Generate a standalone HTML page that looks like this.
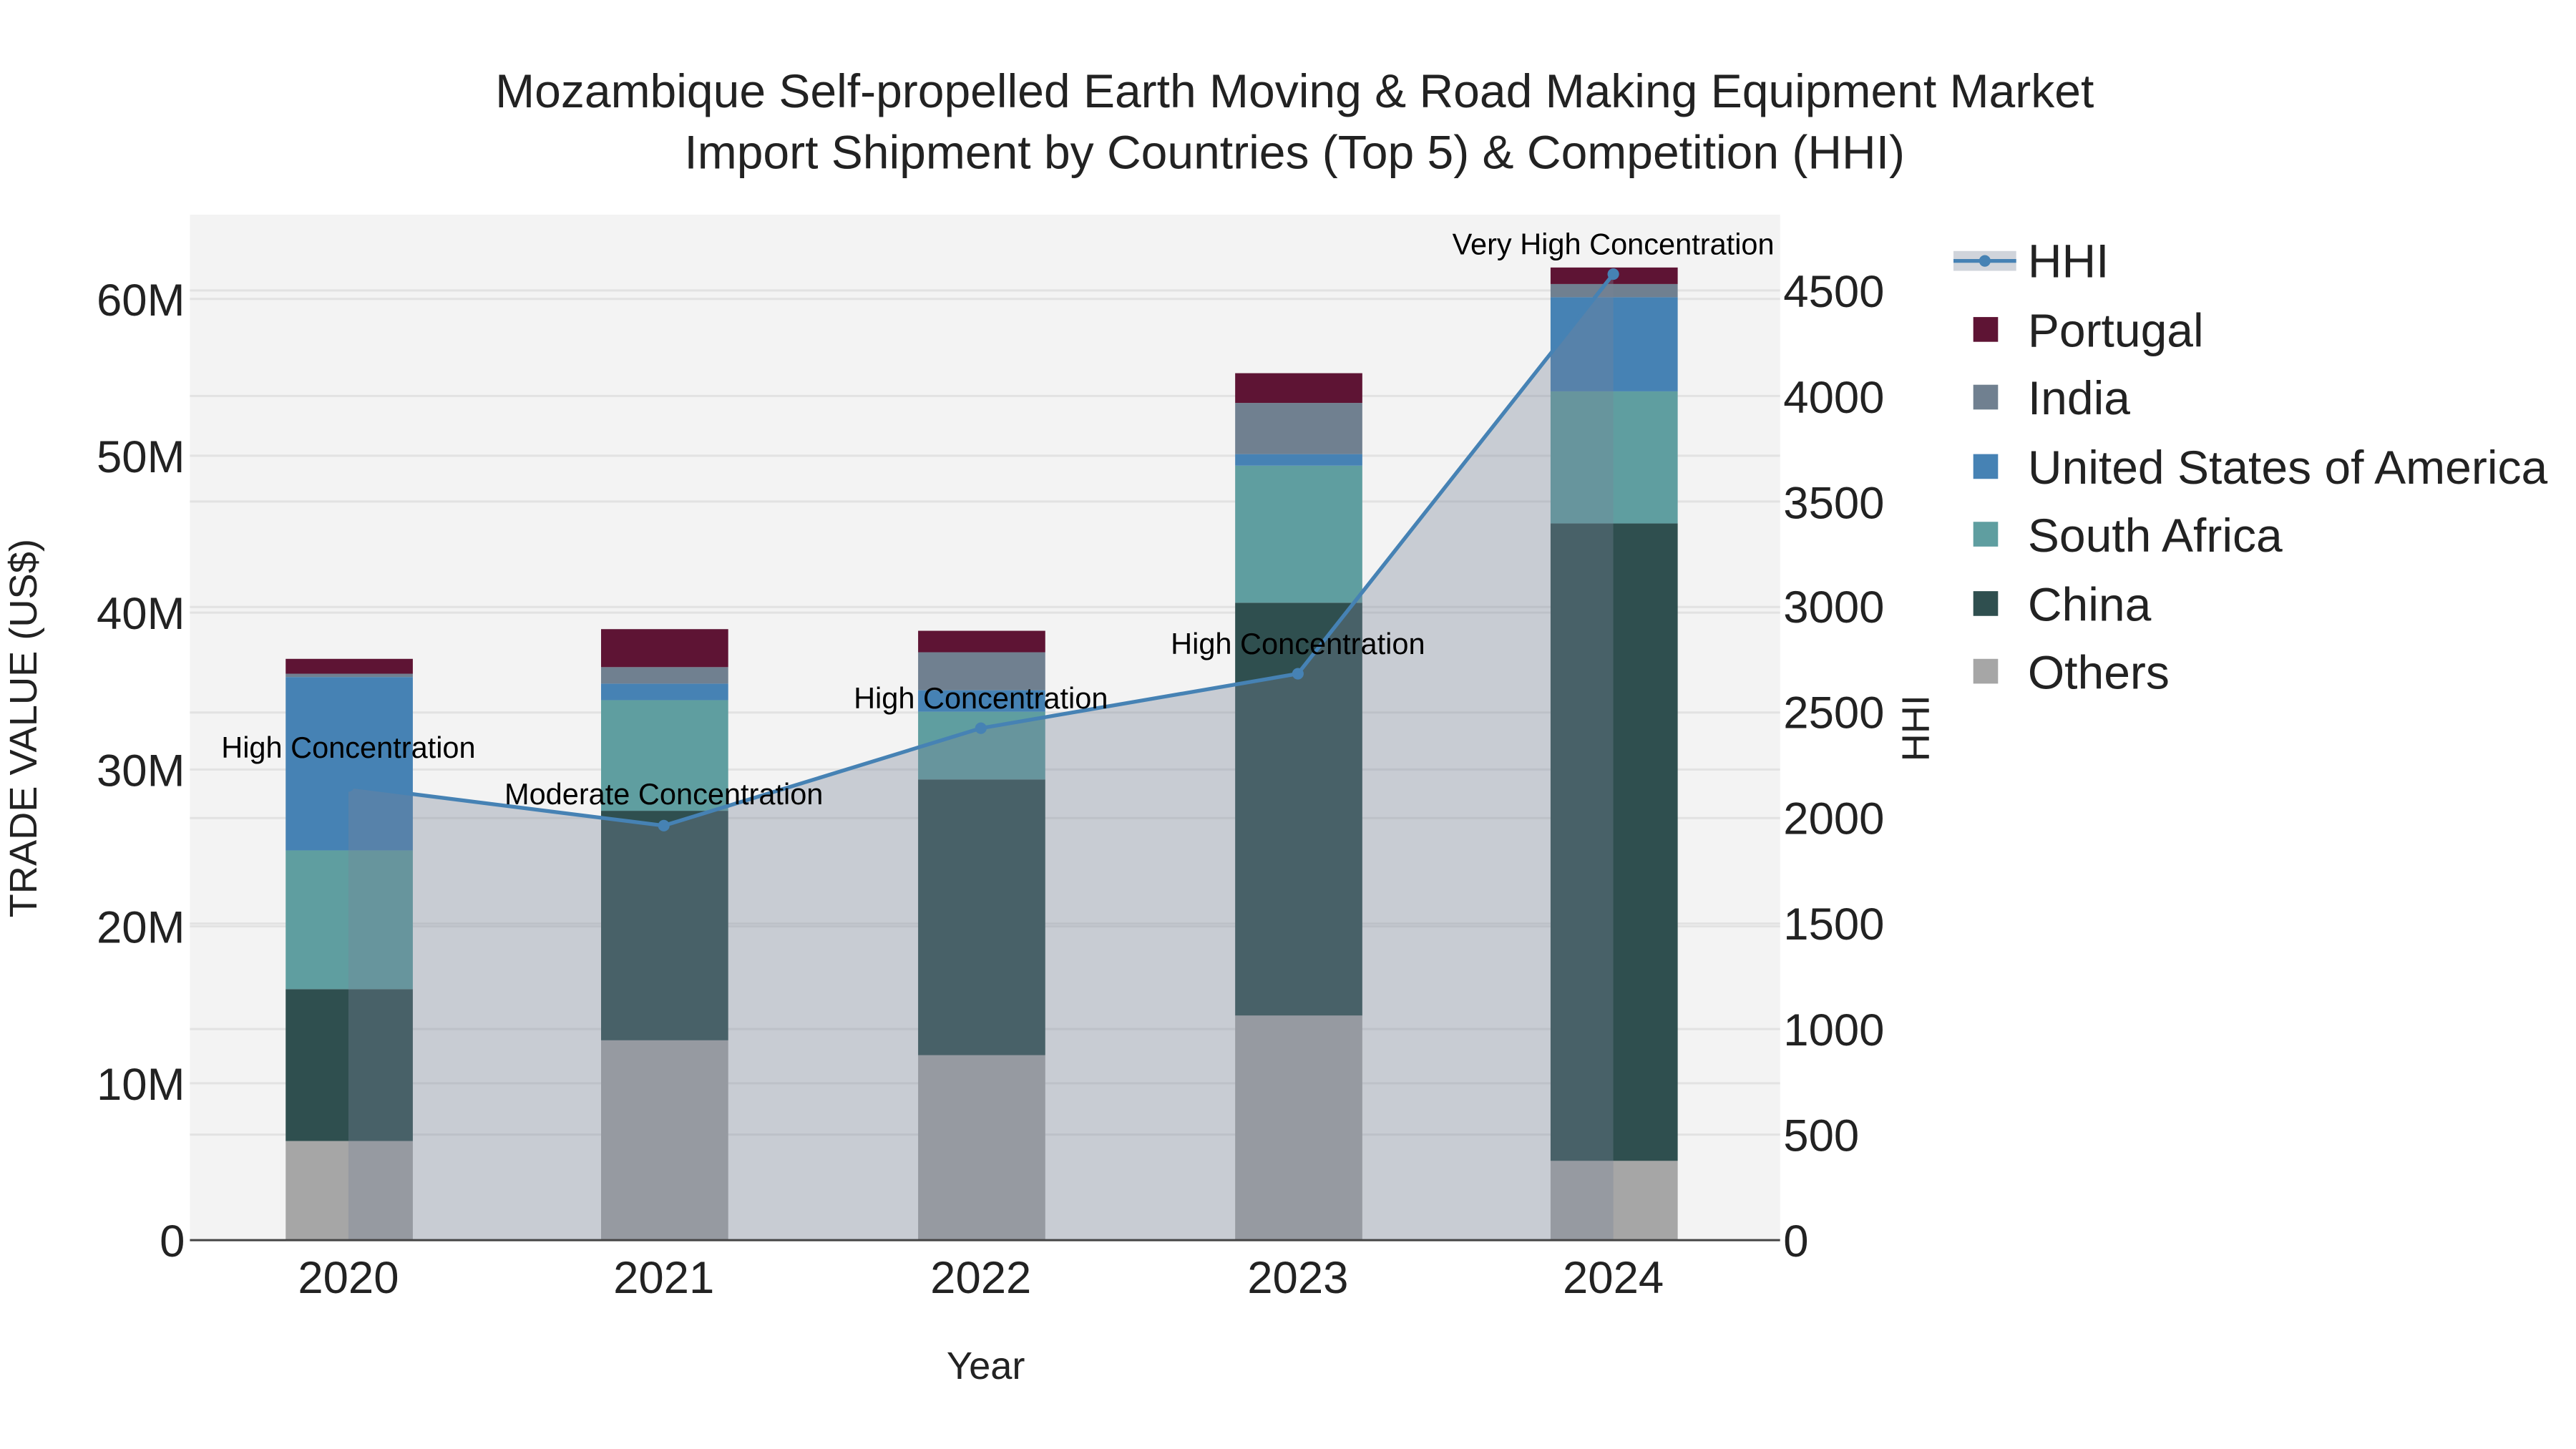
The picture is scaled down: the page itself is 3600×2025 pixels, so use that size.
<!DOCTYPE html>
<html><head><meta charset="utf-8"><style>html,body{margin:0;padding:0;background:#fff}svg{display:block}</style></head>
<body>
<svg width="3600" height="2025" viewBox="0 0 1560 877.5" xmlns="http://www.w3.org/2000/svg" font-family="Liberation Sans, Arial, sans-serif">
<rect width="1560" height="877.5" fill="#fff"/>
<rect x="115" y="130" width="963" height="621" fill="#f3f3f3"/>
<g stroke="#e2e2e2" stroke-width="1.3">
<line x1="115" x2="1078" y1="656" y2="656"/><line x1="115" x2="1078" y1="561" y2="561"/><line x1="115" x2="1078" y1="466" y2="466"/><line x1="115" x2="1078" y1="371" y2="371"/><line x1="115" x2="1078" y1="276" y2="276"/><line x1="115" x2="1078" y1="181" y2="181"/>
<line x1="115" x2="1078" y1="687.1" y2="687.1"/><line x1="115" x2="1078" y1="623.2" y2="623.2"/><line x1="115" x2="1078" y1="559.3" y2="559.3"/><line x1="115" x2="1078" y1="495.4" y2="495.4"/><line x1="115" x2="1078" y1="431.5" y2="431.5"/><line x1="115" x2="1078" y1="367.6" y2="367.6"/><line x1="115" x2="1078" y1="303.7" y2="303.7"/><line x1="115" x2="1078" y1="239.8" y2="239.8"/><line x1="115" x2="1078" y1="175.9" y2="175.9"/>
</g>
<rect x="173" y="691" width="77" height="60" fill="#a6a6a6"/>
<rect x="173" y="599" width="77" height="92" fill="#2f4f4f"/>
<rect x="173" y="515" width="77" height="84" fill="#5f9ea0"/>
<rect x="173" y="410" width="77" height="105" fill="#4682b4"/>
<rect x="173" y="408" width="77" height="2" fill="#708090"/>
<rect x="173" y="399" width="77" height="9" fill="#5e1434"/>
<rect x="364" y="630" width="77" height="121" fill="#a6a6a6"/>
<rect x="364" y="491" width="77" height="139" fill="#2f4f4f"/>
<rect x="364" y="424" width="77" height="67" fill="#5f9ea0"/>
<rect x="364" y="414" width="77" height="10" fill="#4682b4"/>
<rect x="364" y="404" width="77" height="10" fill="#708090"/>
<rect x="364" y="381" width="77" height="23" fill="#5e1434"/>
<rect x="556" y="639" width="77" height="112" fill="#a6a6a6"/>
<rect x="556" y="472" width="77" height="167" fill="#2f4f4f"/>
<rect x="556" y="431" width="77" height="41" fill="#5f9ea0"/>
<rect x="556" y="418" width="77" height="13" fill="#4682b4"/>
<rect x="556" y="395" width="77" height="23" fill="#708090"/>
<rect x="556" y="382" width="77" height="13" fill="#5e1434"/>
<rect x="748" y="615" width="77" height="136" fill="#a6a6a6"/>
<rect x="748" y="365" width="77" height="250" fill="#2f4f4f"/>
<rect x="748" y="282" width="77" height="83" fill="#5f9ea0"/>
<rect x="748" y="275" width="77" height="7" fill="#4682b4"/>
<rect x="748" y="244" width="77" height="31" fill="#708090"/>
<rect x="748" y="226" width="77" height="18" fill="#5e1434"/>
<rect x="939" y="703" width="77" height="48" fill="#a6a6a6"/>
<rect x="939" y="317" width="77" height="386" fill="#2f4f4f"/>
<rect x="939" y="237" width="77" height="80" fill="#5f9ea0"/>
<rect x="939" y="180" width="77" height="57" fill="#4682b4"/>
<rect x="939" y="172" width="77" height="8" fill="#708090"/>
<rect x="939" y="162" width="77" height="10" fill="#5e1434"/>
<path d="M211,476 L402,500 L594,441 L786,408 L977,166 L977,751 L211,751 Z" fill="rgb(120,131,151)" fill-opacity="0.35"/>
<polyline points="211,476 402,500 594,441 786,408 977,166" fill="none" stroke="#4682b4" stroke-width="2.3"/>
<g fill="#4682b4"><circle cx="211" cy="476" r="3.5"/><circle cx="402" cy="500" r="3.5"/><circle cx="594" cy="441" r="3.5"/><circle cx="786" cy="408" r="3.5"/><circle cx="977" cy="166" r="3.5"/></g>
<line x1="115" x2="1078" y1="751" y2="751" stroke="#444" stroke-width="1.3"/>
<g font-size="18" text-anchor="middle" fill="#000">
<text x="211" y="459">High Concentration</text>
<text x="402" y="487">Moderate Concentration</text>
<text x="594" y="429">High Concentration</text>
<text x="786" y="396">High Concentration</text>
<text x="977" y="154">Very High Concentration</text>
</g>
<g font-size="27.5" fill="#222" text-anchor="end">
<text x="112" y="761">0</text><text x="112" y="666">10M</text><text x="112" y="571">20M</text><text x="112" y="476">30M</text><text x="112" y="381">40M</text><text x="112" y="286">50M</text><text x="112" y="191">60M</text>
</g>
<g font-size="27.5" fill="#222">
<text x="1080" y="761">0</text><text x="1080" y="697">500</text><text x="1080" y="633">1000</text><text x="1080" y="569">1500</text><text x="1080" y="505">2000</text><text x="1080" y="441">2500</text><text x="1080" y="377">3000</text><text x="1080" y="314">3500</text><text x="1080" y="250">4000</text><text x="1080" y="186">4500</text>
</g>
<g font-size="27.5" fill="#222" text-anchor="middle">
<text x="211" y="783">2020</text><text x="402" y="783">2021</text><text x="594" y="783">2022</text><text x="786" y="783">2023</text><text x="977" y="783">2024</text>
</g>
<text x="597" y="835" font-size="23.5" fill="#222" text-anchor="middle">Year</text>
<text transform="translate(22,441) rotate(-90)" font-size="23.5" fill="#222" text-anchor="middle">TRADE VALUE (US$)</text>
<text transform="translate(1168,441) rotate(-90)" font-size="23.5" fill="#222" text-anchor="middle">HHI</text>
<g font-size="28.6" text-anchor="middle" fill="#222">
<text x="784" y="65">Mozambique Self-propelled Earth Moving &amp; Road Making Equipment Market</text>
<text x="784" y="102">Import Shipment by Countries (Top 5) &amp; Competition (HHI)</text>
</g>
<rect x="1183" y="152" width="38" height="12" fill="rgb(120,131,151)" fill-opacity="0.35"/>
<line x1="1183" x2="1221" y1="158" y2="158" stroke="#4682b4" stroke-width="2.3"/>
<circle cx="1202" cy="158" r="3.5" fill="#4682b4"/>
<rect x="1195" y="192" width="15" height="15" fill="#5e1434"/>
<rect x="1195" y="233" width="15" height="15" fill="#708090"/>
<rect x="1195" y="275" width="15" height="15" fill="#4682b4"/>
<rect x="1195" y="316" width="15" height="15" fill="#5f9ea0"/>
<rect x="1195" y="358" width="15" height="15" fill="#2f4f4f"/>
<rect x="1195" y="399" width="15" height="15" fill="#a6a6a6"/>
<g font-size="28.6" fill="#222">
<text x="1228" y="168">HHI</text><text x="1228" y="210">Portugal</text><text x="1228" y="251">India</text><text x="1228" y="293">United States of America</text><text x="1228" y="334">South Africa</text><text x="1228" y="376">China</text><text x="1228" y="417">Others</text>
</g>
</svg>
</body></html>
